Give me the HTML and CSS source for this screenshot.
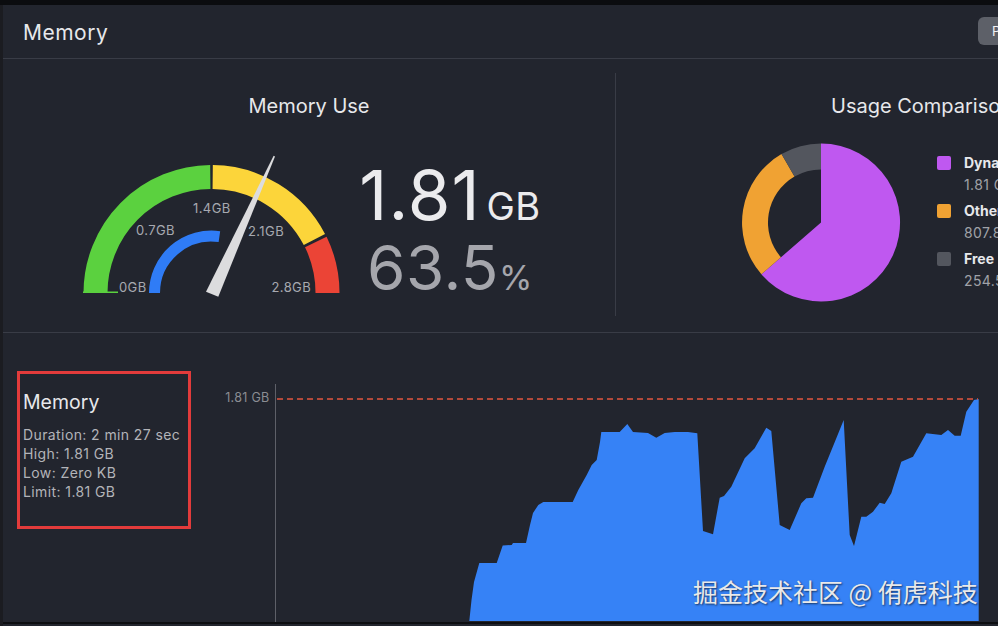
FILE: index.html
```html
<!DOCTYPE html>
<html lang="en">
<head>
    <meta charset="UTF-8">
    <title>Memory Report</title>
    <link rel="stylesheet" href="styles.css">
</head>
<body>
    <div class="window">
        <header class="header">
            <h1 class="page-title">Memory</h1>
            <button class="action">Profile in Instruments</button>
        </header>

        <section class="overview">
            <div class="panel panel-use">
                <h2 class="panel-title">Memory Use</h2>
                <div class="gauge-row">
                    <svg class="gauge" viewBox="0 0 280 160">
                        <!-- scale bands -->
                        <path d="M 25.5 153 A 116 116 0 0 1 140.3 37" stroke="#5bd13f" class="band"/>
                        <path d="M 142.7 37 A 116 116 0 0 1 244.4 99.5" stroke="#fcd53a" class="band"/>
                        <path d="M 245.8 102 A 116 116 0 0 1 257.5 153" stroke="#eb4436" class="band"/>
                        <line x1="13" y1="152.2" x2="48" y2="152.2" stroke="#5bd13f" stroke-width="1.5"/>
                        <!-- current usage -->
                        <path d="M 84.5 153 A 57 57 0 0 1 149.4 96.6" stroke="#2f7cf6" stroke-width="11" fill="none"/>
                        <text x="49" y="151.7" class="gauge-label">0GB</text>
                        <text x="66" y="95" class="gauge-label">0.7GB</text>
                        <text x="123" y="72.7" class="gauge-label">1.4GB</text>
                        <text x="178" y="95.7" class="gauge-label">2.1GB</text>
                        <text x="201.5" y="151.7" class="gauge-label">2.8GB</text>
                        <polygon points="136,151.7 148.3,156.7 205,16.5 203.6,15.8" fill="#dcdcde"/>
                    </svg>
                    <div class="readout">
                        <div class="readout-size">1.81<span class="unit">GB</span></div>
                        <div class="readout-pct">63.5<span class="unit-pct">%</span></div>
                    </div>
                </div>
            </div>

            <div class="divider"></div>

            <div class="panel panel-compare">
                <h2 class="panel-title">Usage Comparison</h2>
                <div class="compare-row">
                    <svg class="pie" viewBox="0 0 160 160">
                        <path d="M 80 79.5 L 80 0.5 A 79 79 0 1 1 20.4 131.3 Z" fill="#bf58f0"/>
                        <path d="M 20.4 131.3 A 79 79 0 0 1 40.5 11.1 L 53.5 33.6 A 53 53 0 0 0 40 114.3 Z" fill="#f0a233"/>
                        <path d="M 40.5 11.1 A 79 79 0 0 1 80 0.5 L 80 26.5 A 53 53 0 0 0 53.5 33.6 Z" fill="#53565e"/>
                    </svg>
                    <ul class="legend">
                        <li>
                            <div class="legend-name"><span class="swatch purple"></span>Dynamic Memory</div>
                            <div class="legend-value">1.81 GB</div>
                        </li>
                        <li>
                            <div class="legend-name"><span class="swatch orange"></span>Other Processes</div>
                            <div class="legend-value">807.8 MB</div>
                        </li>
                        <li>
                            <div class="legend-name"><span class="swatch grey"></span>Free</div>
                            <div class="legend-value">254.5 MB</div>
                        </li>
                    </ul>
                </div>
            </div>
        </section>

        <section class="timeline">
            <div class="summary">
                <h3 class="summary-title">Memory</h3>
                <div class="summary-lines">
                    <p>Duration: 2 min 27 sec</p>
                    <p>High: 1.81 GB</p>
                    <p>Low: Zero KB</p>
                    <p>Limit: 1.81 GB</p>
                </div>
            </div>

            <svg class="chart" viewBox="200 333 798 289">
                <text x="269.5" y="402.3" class="axis-label" text-anchor="end">1.81 GB</text>
                <line x1="275.5" y1="384" x2="275.5" y2="622" stroke="#5e6068" stroke-width="1"/>
                <path class="area" d="M 469.3 621 L 471.5 600 L 474 582 L 479.3 563 L 496.7 563 L 502.7 545.5 L 511.7 545 L 513 543 L 526 543 L 530 525 L 533 513 L 538.3 505 L 543.3 502 L 572.7 502 L 578.3 490 L 586.7 475 L 591.7 465 L 596.7 460 L 600 442 L 601.3 432 L 619.7 432 L 627.3 424 L 633 432 L 648 433 L 656.3 437.7 L 664.7 433 L 674.7 432 L 688 432 L 697.3 433.3 L 703 531 L 713 534.3 L 719.7 497.7 L 724 496 L 731.3 486.7 L 744.7 458.3 L 754.7 448.3 L 766.3 427.7 L 771.3 431 L 779.7 525 L 789.7 530 L 801.3 503.3 L 806.3 498.3 L 813 497.7 L 824.7 466.7 L 836.3 438.3 L 843.7 420 L 849.7 535 L 854 546 L 861.3 516.7 L 866.3 516.7 L 873 511.7 L 879.7 502.7 L 884.7 504 L 891.3 493.3 L 901.3 461.7 L 913 456.7 L 926.3 433.3 L 941.3 435 L 948 430 L 954.7 435.7 L 960.7 435.7 L 966.3 411.7 L 974 400 L 978.7 399 L 978.7 621 Z"/>
                <line x1="277" y1="399" x2="978" y2="399" stroke="#e4553f" stroke-width="1.5" stroke-dasharray="6 4"/>
            </svg>

            <div class="watermark">掘金技术社区 @ 侑虎科技</div>
        </section>
    </div>
</body>
</html>
```

FILE: styles.css
```css
:root {
    --bg: #22252e;
    --line: #393c46;
    --text: #e7e8eb;
    --muted: #a7a9b0;
}

* {
    margin: 0;
    padding: 0;
    box-sizing: border-box;
}

html, body {
    height: 100%;
    overflow: hidden;
}

body {
    background: #0b0c0f;
    font-family: Inter, "Noto Sans", sans-serif;
    color: var(--text);
}

.window {
    width: 1223px;
    height: 621px;
    margin-top: 5px;
    border-left: 3px solid #1b1c21;
    background: var(--bg);
}

.header {
    display: flex;
    align-items: flex-start;
    height: 54px;
    padding: 12px 75px 0 20px;
    border-bottom: 1px solid var(--line);
}

.page-title {
    flex: 1;
    margin-top: 3px;
    font-size: 21px;
    font-weight: 400;
    line-height: 26px;
    letter-spacing: 0.5px;
}

.action {
    width: 170px;
    height: 28px;
    padding: 0 14px;
    border: none;
    border-radius: 6px;
    background: #5d6068;
    color: #f2f2f4;
    font: 13px Inter, sans-serif;
    text-align: left;
}

.overview {
    display: grid;
    grid-template-columns: 612px 1px 1fr;
    height: 274px;
    border-bottom: 1px solid var(--line);
}

.divider {
    background: var(--line);
    margin: 14px 0 16px;
}

.panel {
    padding-top: 35px;
}

.panel-title {
    font-size: 20px;
    font-weight: 400;
    line-height: 24px;
}

.panel-use .panel-title {
    text-align: center;
}

.panel-compare .panel-title {
    padding-left: 215px;
    white-space: nowrap;
}

.gauge-row {
    display: flex;
    margin-top: 22px;
}

.gauge {
    width: 280px;
    height: 160px;
    margin-left: 67px;
    flex-shrink: 0;
}

.band {
    fill: none;
    stroke-width: 24;
}

.gauge-label {
    font: 13px Inter, sans-serif;
    letter-spacing: 0.4px;
    fill: var(--muted);
}

.readout {
    width: 200px;
    margin-top: 21px;
    text-align: center;
    white-space: nowrap;
}

.readout-size {
    font-size: 69px;
    line-height: 69px;
    letter-spacing: 1px;
    color: #ebebed;
}

.unit {
    margin-left: 6px;
    font-size: 38px;
    line-height: 1;
    letter-spacing: 0.5px;
}

.readout-pct {
    margin-top: 7px;
    font-size: 62px;
    line-height: 62px;
    letter-spacing: 0.5px;
    color: #a5a6ac;
}

.unit-pct {
    font-size: 34px;
    line-height: 1;
}

.compare-row {
    display: flex;
    margin-top: 25px;
}

.pie {
    width: 160px;
    height: 160px;
    margin-left: 125px;
    flex-shrink: 0;
}

.legend {
    list-style: none;
    margin: 10px 0 0 36px;
    display: flex;
    flex-direction: column;
    gap: 5px;
    white-space: nowrap;
}

.legend-name {
    display: flex;
    align-items: center;
    gap: 13px;
    font-size: 14px;
    font-weight: 700;
    line-height: 20px;
}

.swatch {
    width: 14px;
    height: 14px;
    border-radius: 2px;
}

.swatch.purple { background: #bf58f0; }
.swatch.orange { background: #f0a233; }
.swatch.grey { background: #53565e; }

.legend-value {
    padding-left: 27px;
    font-size: 14px;
    line-height: 23px;
    letter-spacing: 0.4px;
    color: #a0a2a8;
}

.timeline {
    position: relative;
    display: flex;
    align-items: flex-start;
    height: 291px;
    border-bottom: 2px solid #0d0e11;
}

.summary {
    flex-shrink: 0;
    width: 174px;
    height: 158px;
    margin: 38px 0 0 14px;
    padding: 16px 0 0 3px;
    border: 3px solid #e23b3b;
}

.summary-title {
    font-size: 19.5px;
    font-weight: 400;
    line-height: 24px;
}

.summary-lines {
    margin-top: 11px;
    font-size: 14px;
    line-height: 19px;
    letter-spacing: 0.4px;
    color: #b3b4b9;
    white-space: nowrap;
}

.chart {
    display: block;
    flex-shrink: 0;
    width: 798px;
    height: 289px;
    margin-left: 9px;
}

.axis-label {
    font: 12.5px Inter, sans-serif;
    letter-spacing: 0.3px;
    fill: #8b8d93;
}

.area {
    fill: #3682f6;
}

.watermark {
    position: absolute;
    left: 690px;
    top: 243px;
    font: 25px "Noto Sans CJK SC", sans-serif;
    line-height: 30px;
    color: #e9e9ea;
    text-shadow: 1px 1px 2px rgba(0, 0, 0, 0.6);
    white-space: nowrap;
}
```
